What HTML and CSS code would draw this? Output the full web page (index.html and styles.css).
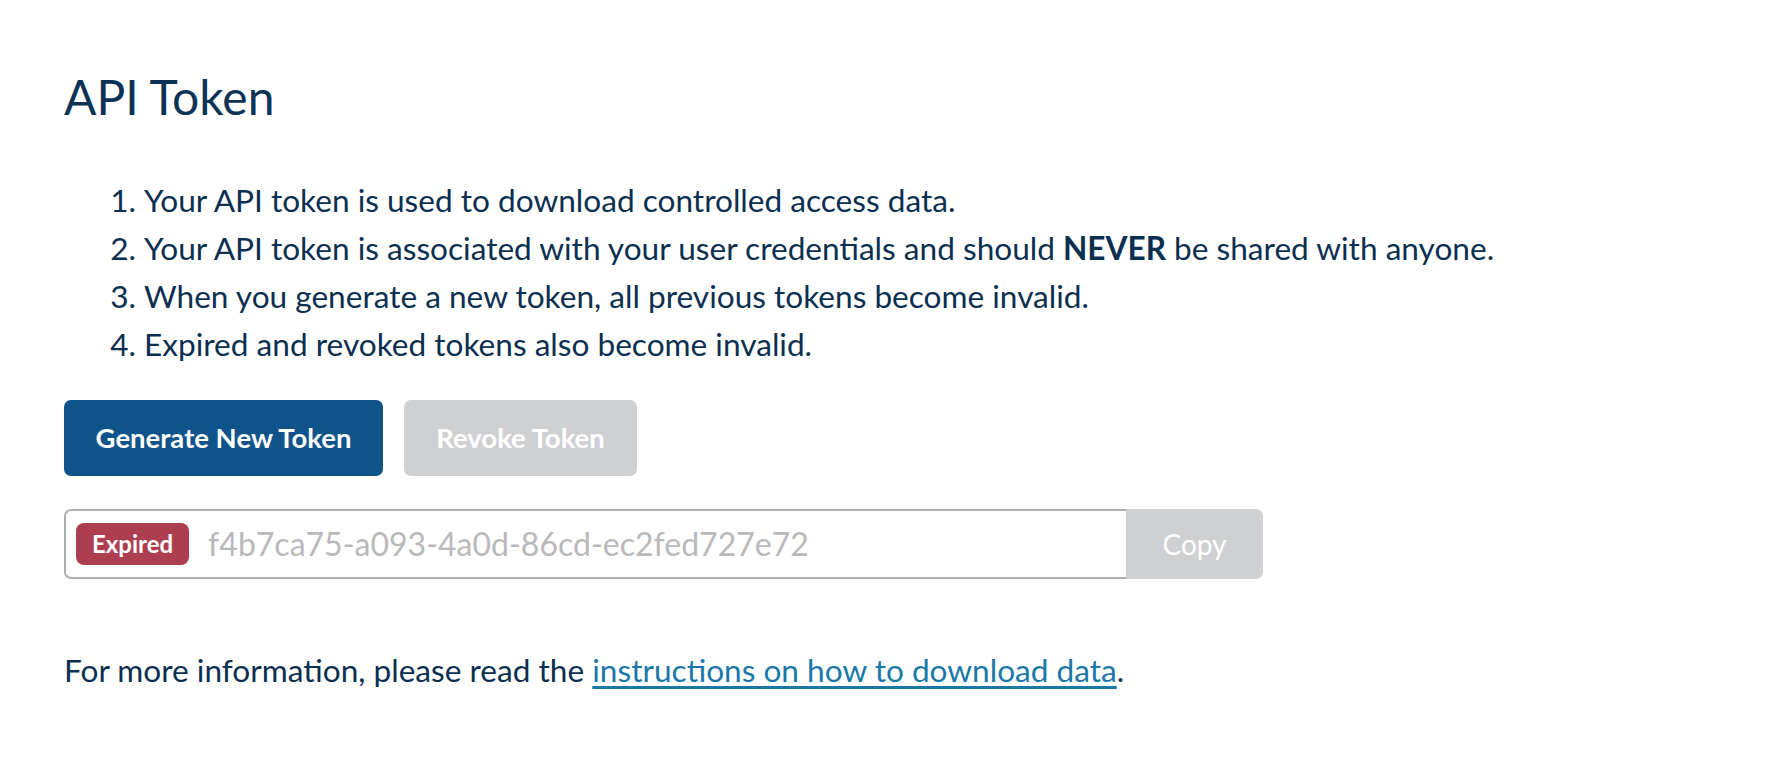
FILE: index.html
```html
<!DOCTYPE html>
<html lang="en">
<head>
<meta charset="utf-8">
<title>API Token</title>
<link rel="stylesheet" href="styles.css">
</head>
<body>
<main class="page">
  <h1 class="title">API Token</h1>
  <ol class="notes">
    <li>Your API token is used to download controlled access data.</li>
    <li>Your API token is associated with your user credentials and should <strong>NEVER</strong> be shared with anyone.</li>
    <li>When you generate a new token, all previous tokens become invalid.</li>
    <li>Expired and revoked tokens also become invalid.</li>
  </ol>
  <div class="actions">
    <button class="btn btn-primary" type="button">Generate New Token</button>
    <button class="btn btn-disabled" type="button" disabled>Revoke Token</button>
  </div>
  <div class="token-group">
    <div class="token-field">
      <span class="badge">Expired</span>
      <span class="token">f4b7ca75-a093-4a0d-86cd-ec2fed727e72</span>
    </div>
    <button class="copy" type="button" disabled>Copy</button>
  </div>
  <p class="info">For more information, please read the <a href="#" class="link">instructions on how to download data</a>.</p>
</main>
</body>
</html>
```
FILE: styles.css
```css
html, body {
  margin: 0;
  padding: 0;
  background: #ffffff;
}
body {
  font-family: Lato, "Noto Sans", sans-serif;
  color: #0b2f51;
}
.page {
  padding: 68px 64px 0 64px;
}
.title {
  margin: 0;
  font-size: 48px;
  font-weight: 400;
  line-height: 57.6px;
  color: #0b3356;
}
.notes {
  margin: 50px 0 0 0;
  padding-left: 80px;
  font-size: 31.6px;
  line-height: 48px;
}
.notes strong {
  font-weight: 700;
}
.actions {
  display: flex;
  gap: 21px;
  margin-top: 32px;
}
.btn {
  height: 76px;
  border: none;
  border-radius: 7px;
  font-family: Lato, "Noto Sans", sans-serif;
  font-size: 27.5px;
  font-weight: 700;
  color: #ffffff;
  padding: 0 30px;
  cursor: pointer;
}
.btn-primary {
  background: #0e5389;
  width: 319px;
}
.btn-disabled {
  background: #cfd0d4;
  width: 233px;
  cursor: default;
}
.token-group {
  display: flex;
  width: 1199px;
  height: 70px;
  margin-top: 33px;
}
.token-field {
  flex: 1;
  display: flex;
  align-items: center;
  gap: 19px;
  border: 2px solid #aeaeb2;
  border-right: none;
  border-radius: 7px 0 0 7px;
  padding-left: 10px;
}
.badge {
  display: inline-flex;
  align-items: center;
  height: 42px;
  padding: 0 16px;
  border-radius: 8px;
  background: #ad3e50;
  color: #ffffff;
  font-size: 24px;
  font-weight: 700;
}
.token {
  font-size: 32px;
  color: #b9b9bc;
}
.copy {
  width: 137px;
  border: none;
  border-radius: 0 7px 7px 0;
  background: #cfd0d4;
  color: #ffffff;
  font-family: Lato, "Noto Sans", sans-serif;
  font-size: 28px;
  font-weight: 400;
}
.info {
  margin: 67px 0 0 0;
  font-size: 31.6px;
  line-height: 48px;
}
.link {
  color: #1a78a8;
  text-decoration: underline;
  text-underline-offset: 4px;
}
```
